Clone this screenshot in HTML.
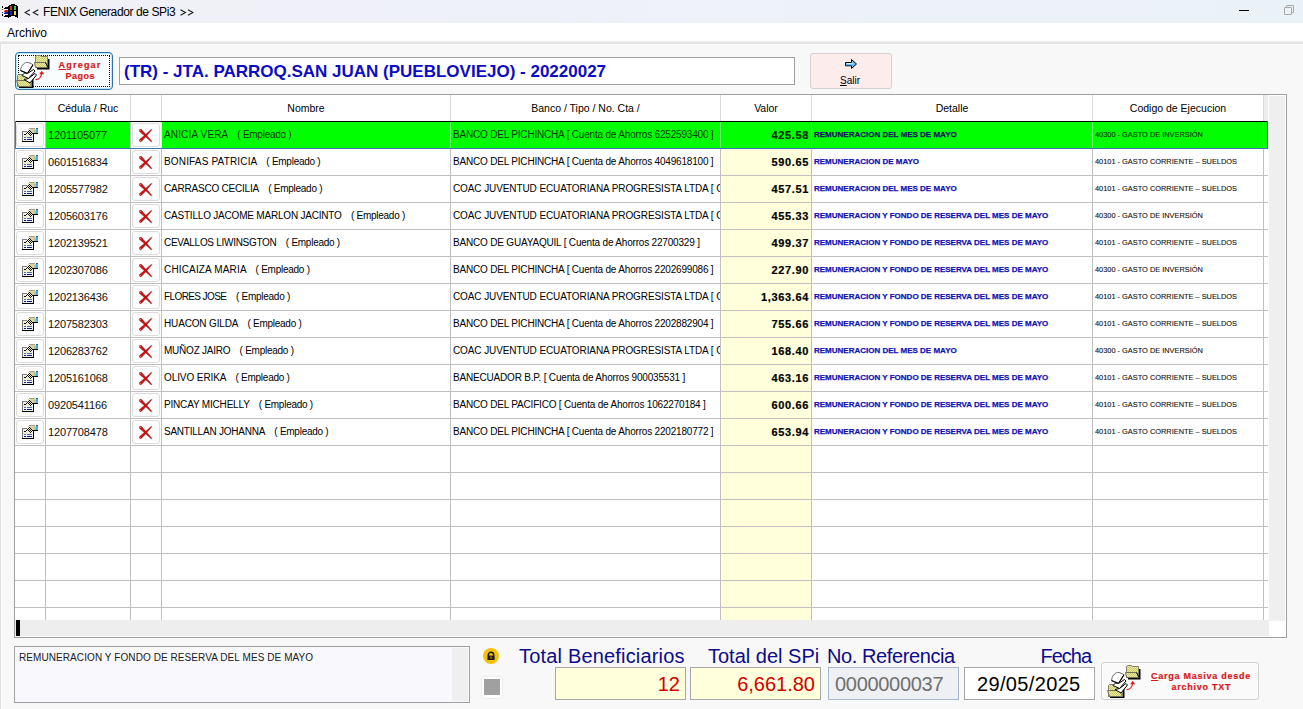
<!DOCTYPE html>
<html><head><meta charset="utf-8"><title>FENIX Generador de SPi3</title>
<style>
*{margin:0;padding:0;box-sizing:border-box}
html,body{width:1303px;height:709px;overflow:hidden;background:#f8f8f8;font-family:"Liberation Sans",sans-serif;color:#000}
.a{position:absolute}
.t{position:absolute;white-space:nowrap;line-height:1}
.eb{position:absolute;width:27px;height:24px;border:1px solid #dcdcdc;border-radius:3px;background:#fdfdfd}
.nm{font-size:10px}
.em{font-size:10px;letter-spacing:-0.26px}
.bk{font-size:10px;letter-spacing:-0.19px}
.vl{font-size:11px;font-weight:bold;letter-spacing:0.65px;-webkit-text-stroke:0.2px #000;text-align:right;width:88px}
.dt{font-size:8px;font-weight:bold;color:#1212b0;-webkit-text-stroke:0.25px #1212b0}
.cd{font-size:7.4px;color:#101010;-webkit-text-stroke:0.1px #101010}
.ced{font-size:11px;letter-spacing:-0.15px;color:#101010}
.lbl{font-size:20px;color:#0c0c88;top:646px}
.fld{position:absolute;top:667px;width:131px;height:33px;border:1px solid #a8a8a8}
.fv{font-size:20px;top:674px}
</style></head><body>

<div class="a" style="left:0;top:0;width:1303px;height:23px;background:linear-gradient(90deg,#f0f0f5 0%,#eff1f9 40%,#edf2f8 70%,#ebf2f7 100%)"></div>
<svg class="a" style="left:0;top:0" width="20" height="20" viewBox="0 0 20 20" shape-rendering="crispEdges"><path d="M8,6 L9,6 L9,5 L11,5 L11,4 L15,4 L15,5 L17,5 L17,6 L18,6 L18,18 L17,18 L17,17 L15,17 L15,16 L11,16 L11,17 L9,17 L9,18 L8,18 Z" fill="#000"/><rect x="10" y="6" width="2" height="4" fill="#e02828"/><rect x="14" y="6" width="2" height="4" fill="#30d040"/><rect x="10" y="11" width="2" height="4" fill="#1020d0"/><rect x="14" y="11" width="2" height="4" fill="#f0e030"/><rect x="2" y="6" width="1" height="2" fill="#000"/><rect x="2" y="9" width="1" height="1" fill="#904040"/><rect x="2" y="12" width="1" height="1" fill="#2020a0"/><rect x="2" y="14" width="1" height="2" fill="#000"/><rect x="4" y="7" width="4" height="2" fill="#000"/><rect x="4" y="10" width="4" height="2" fill="#d01818"/><rect x="4" y="12" width="4" height="2" fill="#1818b0"/><rect x="4" y="15" width="4" height="2" fill="#000"/><rect x="4" y="7" width="1" height="1" fill="#fff"/><rect x="4" y="10" width="1" height="1" fill="#f0b0b0"/><rect x="4" y="12" width="1" height="1" fill="#b0b0f0"/><rect x="4" y="15" width="1" height="1" fill="#fff"/></svg>
<svg class="a" style="left:24px;top:9px" width="170" height="7" viewBox="0 0 170 7"><g fill="none" stroke="#1a1a1a" stroke-width="1.1"><path d="M6,0.8 L1,3.5 L6,6.2"/><path d="M14.3,0.8 L9.3,3.5 L14.3,6.2"/><path d="M156.5,0.8 L161.5,3.5 L156.5,6.2"/><path d="M164,0.8 L169,3.5 L164,6.2"/></g></svg>
<div class="t" style="left:43px;top:6px;font-size:12px;letter-spacing:-0.4px;color:#000">FENIX Generador de SPi3</div>
<div class="a" style="left:1239px;top:10px;width:10px;height:1px;background:#000"></div>
<div class="a" style="left:1286px;top:5px;width:8px;height:8px;border:1px solid #a8a8a8;border-radius:1px"></div>
<div class="a" style="left:1284px;top:7px;width:8px;height:8px;border:1px solid #a8a8a8;background:#ebf2f7;border-radius:1px"></div>
<div class="a" style="left:0;top:23px;width:1303px;height:18px;background:#fff"></div>
<div class="t" style="left:7px;top:27px;font-size:12px">Archivo</div>
<div class="a" style="left:0;top:41px;width:1303px;height:1px;background:#eeeeee"></div>
<div class="a" style="left:0;top:42px;width:1303px;height:2px;background:#e3e3e3"></div>
<div class="a" style="left:0;top:44px;width:1303px;height:1px;background:#ffffff"></div>
<div class="a" style="left:0;top:44px;width:1px;height:665px;background:#e0e0e0"></div>
<div class="a" style="left:1px;top:45px;width:1px;height:664px;background:#ffffff"></div>
<div class="a" style="left:15px;top:52px;width:98px;height:38px;border:1px solid #2e6eaa;border-radius:4px;background:#fafdfe;box-shadow:inset 0 0 0 1px #b4eafc"></div>
<div class="a" style="left:18px;top:55px;width:92px;height:32px;border:1px dotted #000"></div>
<svg class="a" style="left:16px;top:54px" width="34" height="34" viewBox="0 0 34 34"><defs><pattern id="chk1" width="2" height="2" patternUnits="userSpaceOnUse"><rect width="2" height="2" fill="#eeee9a"/><rect width="1" height="1" fill="#c8c870"/><rect x="1" y="1" width="1" height="1" fill="#c8c870"/></pattern></defs><rect x="21" y="5" width="12.5" height="10.5" fill="#000"/><path d="M19.5,8.5 L19.5,2.5 L20.5,1.5 L24.5,1.5 L25.5,2.5 L31.5,2.5 L31.5,13.5 L19.5,13.5 Z" fill="url(#chk1)" stroke="#808070" stroke-width="1"/><path d="M18.5,8.5 L29.5,8.5 L32,13.5 L19.5,13.5 Z" fill="url(#chk1)" stroke="#707060" stroke-width="1"/><path d="M29.5,8.5 L32,13.5" stroke="#000" stroke-width="1"/><rect x="3" y="25" width="14.5" height="9" fill="#000"/><path d="M1.5,26.5 L1.5,21.5 L2.5,20.5 L6.5,20.5 L7.5,21.5 L15.5,21.5 L15.5,32.5 L1.5,32.5 Z" fill="url(#chk1)" stroke="#808070" stroke-width="1"/><path d="M0.5,26.5 L12.5,26.5 L15.5,32.5 L2.5,32.5 Z" fill="url(#chk1)" stroke="#707060" stroke-width="1"/><path d="M4.5,16.5 C5,12.5 7.5,8.8 10.5,8.5 C13,8.3 15,9.5 17,10.8 L11.5,19.5 Z" fill="#fff" stroke="#6a6a6a" stroke-width="1"/><path d="M17,10.8 L11.5,19.5 L4.5,16.5" fill="none" stroke="#000" stroke-width="1.1"/><path d="M6,21.5 L8.5,19 L11.5,19.5 L17.5,15.5 L19,17 L12.5,24.5 Z" fill="#fff" stroke="#000" stroke-width="1"/><path d="M8,25.5 L12.5,24.5 L19,19.5 L20.5,21 L14,29 Z" fill="#fff" stroke="#000" stroke-width="1"/><path d="M19.5,25.6 C22.5,25.6 25,24 25.6,19.5" fill="none" stroke="#e01818" stroke-width="1.2"/><path d="M23.2,20.2 L25.7,16.8 L28.2,20.2 Z" fill="#e01818"/></svg>
<div class="t" style="left:58.6px;top:60.1px;font-size:9px;font-weight:bold;letter-spacing:1.2px;color:#d81818;-webkit-text-stroke:0.2px #d81818;line-height:11px"><u>A</u>gregar</div>
<div class="t" style="left:65.4px;top:71.1px;font-size:9px;font-weight:bold;letter-spacing:0.5px;color:#d81818;-webkit-text-stroke:0.2px #d81818;line-height:11px">Pagos</div>
<div class="a" style="left:119px;top:57px;width:676px;height:28px;border:1px solid #a0a0a0;background:#fff"></div>
<div class="t" style="left:124px;top:63px;font-size:17px;font-weight:bold;color:#0c0cc4">(TR) - JTA. PARROQ.SAN JUAN (PUEBLOVIEJO) - 20220027</div>
<div class="a" style="left:810px;top:53px;width:82px;height:36px;border:1px solid #d2d2d2;border-radius:3px;background:#fcecec"></div>
<svg class="a" style="left:845px;top:59px" width="13" height="11" viewBox="0 0 13 11"><path d="M0.5,3.5 L6.5,3.5 L6.5,0.5 L11.5,5 L6.5,9.5 L6.5,6.8 L0.5,6.8 Z" fill="#6cc4f4" stroke="#000" stroke-width="1"/><path d="M1.5,4.6 L8,4.6" stroke="#c8f0ff" stroke-width="1"/><path d="M1,6.4 L6.5,6.4" stroke="#1a58b0" stroke-width="0.8"/></svg>
<div class="t" style="left:840px;top:76px;font-size:10px"><u>S</u>alir</div>
<div class="a" style="left:14px;top:94px;width:1273px;height:544px;border:1px solid #a0a0a0;background:#fff"></div>
<div class="a" style="left:721px;top:149px;width:90px;height:471px;background:#ffffdc"></div>
<div class="a" style="left:1264px;top:95px;width:4px;height:26px;background:#ededed"></div>
<div class="a" style="left:1269px;top:96px;width:16px;height:525px;background:#efefef"></div>
<div class="a" style="left:15px;top:620px;width:1254px;height:16px;background:#eeeeee"></div>
<div class="a" style="left:1269px;top:621px;width:17px;height:16px;background:#fff"></div>
<div class="a" style="left:16px;top:620px;width:4px;height:16px;background:#000"></div>
<div class="a" style="left:45px;top:95px;width:1px;height:26px;background:#dadada"></div>
<div class="a" style="left:130px;top:95px;width:1px;height:26px;background:#dadada"></div>
<div class="a" style="left:161px;top:95px;width:1px;height:26px;background:#dadada"></div>
<div class="a" style="left:450px;top:95px;width:1px;height:26px;background:#dadada"></div>
<div class="a" style="left:720px;top:95px;width:1px;height:26px;background:#dadada"></div>
<div class="a" style="left:811px;top:95px;width:1px;height:26px;background:#dadada"></div>
<div class="a" style="left:1092px;top:95px;width:1px;height:26px;background:#dadada"></div>
<div class="a" style="left:1263px;top:95px;width:1px;height:26px;background:#dadada"></div>
<div class="a" style="left:15px;top:121px;width:1253px;height:1px;background:#c0c0c0"></div>
<div class="a" style="left:15px;top:148px;width:1253px;height:1px;background:#c0c0c0"></div>
<div class="a" style="left:15px;top:175px;width:1253px;height:1px;background:#c0c0c0"></div>
<div class="a" style="left:15px;top:202px;width:1253px;height:1px;background:#c0c0c0"></div>
<div class="a" style="left:15px;top:229px;width:1253px;height:1px;background:#c0c0c0"></div>
<div class="a" style="left:15px;top:256px;width:1253px;height:1px;background:#c0c0c0"></div>
<div class="a" style="left:15px;top:283px;width:1253px;height:1px;background:#c0c0c0"></div>
<div class="a" style="left:15px;top:310px;width:1253px;height:1px;background:#c0c0c0"></div>
<div class="a" style="left:15px;top:337px;width:1253px;height:1px;background:#c0c0c0"></div>
<div class="a" style="left:15px;top:364px;width:1253px;height:1px;background:#c0c0c0"></div>
<div class="a" style="left:15px;top:391px;width:1253px;height:1px;background:#c0c0c0"></div>
<div class="a" style="left:15px;top:418px;width:1253px;height:1px;background:#c0c0c0"></div>
<div class="a" style="left:15px;top:445px;width:1253px;height:1px;background:#c0c0c0"></div>
<div class="a" style="left:15px;top:472px;width:1253px;height:1px;background:#c0c0c0"></div>
<div class="a" style="left:15px;top:499px;width:1253px;height:1px;background:#c0c0c0"></div>
<div class="a" style="left:15px;top:526px;width:1253px;height:1px;background:#c0c0c0"></div>
<div class="a" style="left:15px;top:553px;width:1253px;height:1px;background:#c0c0c0"></div>
<div class="a" style="left:15px;top:580px;width:1253px;height:1px;background:#c0c0c0"></div>
<div class="a" style="left:15px;top:607px;width:1253px;height:1px;background:#c0c0c0"></div>
<div class="a" style="left:45px;top:121px;width:1px;height:499px;background:#c0c0c0"></div>
<div class="a" style="left:130px;top:121px;width:1px;height:499px;background:#c0c0c0"></div>
<div class="a" style="left:161px;top:121px;width:1px;height:499px;background:#c0c0c0"></div>
<div class="a" style="left:450px;top:121px;width:1px;height:499px;background:#c0c0c0"></div>
<div class="a" style="left:720px;top:121px;width:1px;height:499px;background:#c0c0c0"></div>
<div class="a" style="left:811px;top:121px;width:1px;height:499px;background:#c0c0c0"></div>
<div class="a" style="left:1092px;top:121px;width:1px;height:499px;background:#c0c0c0"></div>
<div class="a" style="left:1263px;top:121px;width:1px;height:499px;background:#c0c0c0"></div>
<div class="t" style="left:46px;top:103px;width:84px;text-align:center;font-size:10.5px">Cédula / Ruc</div>
<div class="t" style="left:162px;top:103px;width:288px;text-align:center;font-size:10.5px">Nombre</div>
<div class="t" style="left:451px;top:103px;width:269px;text-align:center;font-size:10.5px">Banco / Tipo / No. Cta /</div>
<div class="t" style="left:721px;top:103px;width:90px;text-align:center;font-size:10.5px">Valor</div>
<div class="t" style="left:812px;top:103px;width:280px;text-align:center;font-size:10.5px">Detalle</div>
<div class="t" style="left:1093px;top:103px;width:170px;text-align:center;font-size:10.5px">Codigo de Ejecucion</div>
<div class="a" style="left:46px;top:122px;width:84px;height:26px;background:#00ff00"></div>
<div class="a" style="left:162px;top:122px;width:1106px;height:26px;background:#00ff00"></div>
<div class="a" style="left:161px;top:122px;width:1px;height:26px;background:#e4f0e4"></div>
<div class="a" style="left:450px;top:122px;width:1px;height:26px;background:#70f870"></div>
<div class="a" style="left:720px;top:122px;width:1px;height:26px;background:#70f870"></div>
<div class="a" style="left:811px;top:122px;width:1px;height:26px;background:#70f870"></div>
<div class="a" style="left:1092px;top:122px;width:1px;height:26px;background:#70f870"></div>
<div class="a" style="left:1263px;top:122px;width:1px;height:26px;background:#70f870"></div>
<div class="eb" style="left:16px;top:123px;width:28px"></div>
<svg class="a" style="left:21px;top:126px" width="18" height="17" viewBox="0 0 18 17" shape-rendering="crispEdges"><rect x="1" y="5" width="12" height="11" fill="#f2f2fc"/><rect x="2" y="7" width="9" height="4" fill="#eeeed0"/><rect x="1" y="5" width="1" height="10" fill="#747474"/><rect x="1" y="5" width="5" height="1" fill="#808080"/><rect x="12" y="8" width="1" height="8" fill="#000"/><rect x="1" y="15" width="12" height="1" fill="#000"/><rect x="3" y="11" width="2" height="1" fill="#5a64b0"/><rect x="6" y="11" width="5" height="1" fill="#4a6c90"/><rect x="3" y="13" width="2" height="1" fill="#101088"/><rect x="6" y="13" width="5" height="1" fill="#101880"/><rect x="8" y="2" width="6" height="1" fill="#a8a080"/><rect x="9" y="3" width="6" height="4" fill="#d8d0a0"/><rect x="13" y="4" width="2" height="3" fill="#b8c090"/><rect x="15" y="2" width="2" height="1" fill="#2060a0"/><rect x="15" y="3" width="2" height="4" fill="#4aa8ee"/><rect x="11" y="7" width="6" height="1" fill="#000"/><g fill="#000"><rect x="3" y="8" width="2" height="1"/><rect x="5" y="7" width="1" height="1"/><rect x="6" y="6" width="1" height="1"/><rect x="7" y="5" width="1" height="1"/><rect x="8" y="4" width="1" height="1"/><rect x="7" y="7" width="1" height="1"/><rect x="8" y="6" width="1" height="1"/><rect x="9" y="5" width="1" height="1"/><rect x="8" y="8" width="1" height="1"/><rect x="9" y="9" width="1" height="1"/><rect x="10" y="8" width="1" height="1"/><rect x="9" y="7" width="1" height="1"/><rect x="10" y="6" width="1" height="1"/></g><g fill="#f4f4c8"><rect x="4" y="7" width="1" height="1"/><rect x="5" y="6" width="1" height="1"/><rect x="6" y="5" width="1" height="1"/><rect x="7" y="4" width="1" height="1"/><rect x="6" y="7" width="1" height="1"/><rect x="7" y="6" width="1" height="1"/><rect x="8" y="5" width="1" height="1"/><rect x="8" y="7" width="1" height="1"/><rect x="9" y="8" width="1" height="1"/><rect x="9" y="6" width="1" height="1"/></g><rect x="7" y="3" width="1" height="1" fill="#c8c8b0"/></svg>
<div class="eb" style="left:132px;top:123px;width:28px"></div>
<svg class="a" style="left:139px;top:129px" width="14" height="14" viewBox="0 0 14 14"><polygon points="0,1.3 1.3,0 2.6,0.6 7,5.6 12.9,12.3 12.3,12.9 5.8,7 0.6,2.6" fill="#cc1414" stroke="#7a0808" stroke-width="0.35"/><polygon points="0,11.5 1.4,12.9 2.4,12.4 7.4,7.2 12.9,0.7 12.4,0.2 6.2,5.8 0.5,10.6" fill="#cc1414" stroke="#7a0808" stroke-width="0.35"/><circle cx="1.3" cy="1.3" r="0.6" fill="#ff9080"/><circle cx="1.2" cy="11.7" r="0.6" fill="#ff9080"/></svg>
<div class="t ced" style="left:48px;top:130px;color:#0a3a0a;">1201105077</div>
<div class="t nm" style="left:164px;top:130px;letter-spacing:0.149px;color:#0a3a0a;">ANICIA VERA</div>
<div class="t em" style="left:237.3px;top:130px;color:#0a3a0a;">( Empleado )</div>
<div class="a" style="left:451px;top:122px;width:269px;height:26px;overflow:hidden"><div class="t bk" style="left:2px;top:8px;color:#0a3a0a;">BANCO DEL PICHINCHA [ Cuenta de Ahorros 6252593400 ]</div></div>
<div class="t vl" style="left:721px;top:130px;color:#0a3a0a;">425.58</div>
<div class="t dt" style="left:814px;top:131px;color:#101030;">REMUNERACION DEL MES DE MAYO</div>
<div class="t cd" style="left:1095px;top:131px;color:#0a3a0a;">40300 - GASTO DE INVERSIÓN</div>
<div class="eb" style="left:16px;top:150px;width:28px"></div>
<svg class="a" style="left:21px;top:153px" width="18" height="17" viewBox="0 0 18 17" shape-rendering="crispEdges"><rect x="1" y="5" width="12" height="11" fill="#f2f2fc"/><rect x="2" y="7" width="9" height="4" fill="#eeeed0"/><rect x="1" y="5" width="1" height="10" fill="#747474"/><rect x="1" y="5" width="5" height="1" fill="#808080"/><rect x="12" y="8" width="1" height="8" fill="#000"/><rect x="1" y="15" width="12" height="1" fill="#000"/><rect x="3" y="11" width="2" height="1" fill="#5a64b0"/><rect x="6" y="11" width="5" height="1" fill="#4a6c90"/><rect x="3" y="13" width="2" height="1" fill="#101088"/><rect x="6" y="13" width="5" height="1" fill="#101880"/><rect x="8" y="2" width="6" height="1" fill="#a8a080"/><rect x="9" y="3" width="6" height="4" fill="#d8d0a0"/><rect x="13" y="4" width="2" height="3" fill="#b8c090"/><rect x="15" y="2" width="2" height="1" fill="#2060a0"/><rect x="15" y="3" width="2" height="4" fill="#4aa8ee"/><rect x="11" y="7" width="6" height="1" fill="#000"/><g fill="#000"><rect x="3" y="8" width="2" height="1"/><rect x="5" y="7" width="1" height="1"/><rect x="6" y="6" width="1" height="1"/><rect x="7" y="5" width="1" height="1"/><rect x="8" y="4" width="1" height="1"/><rect x="7" y="7" width="1" height="1"/><rect x="8" y="6" width="1" height="1"/><rect x="9" y="5" width="1" height="1"/><rect x="8" y="8" width="1" height="1"/><rect x="9" y="9" width="1" height="1"/><rect x="10" y="8" width="1" height="1"/><rect x="9" y="7" width="1" height="1"/><rect x="10" y="6" width="1" height="1"/></g><g fill="#f4f4c8"><rect x="4" y="7" width="1" height="1"/><rect x="5" y="6" width="1" height="1"/><rect x="6" y="5" width="1" height="1"/><rect x="7" y="4" width="1" height="1"/><rect x="6" y="7" width="1" height="1"/><rect x="7" y="6" width="1" height="1"/><rect x="8" y="5" width="1" height="1"/><rect x="8" y="7" width="1" height="1"/><rect x="9" y="8" width="1" height="1"/><rect x="9" y="6" width="1" height="1"/></g><rect x="7" y="3" width="1" height="1" fill="#c8c8b0"/></svg>
<div class="eb" style="left:132px;top:150px;width:28px"></div>
<svg class="a" style="left:139px;top:156px" width="14" height="14" viewBox="0 0 14 14"><polygon points="0,1.3 1.3,0 2.6,0.6 7,5.6 12.9,12.3 12.3,12.9 5.8,7 0.6,2.6" fill="#cc1414" stroke="#7a0808" stroke-width="0.35"/><polygon points="0,11.5 1.4,12.9 2.4,12.4 7.4,7.2 12.9,0.7 12.4,0.2 6.2,5.8 0.5,10.6" fill="#cc1414" stroke="#7a0808" stroke-width="0.35"/><circle cx="1.3" cy="1.3" r="0.6" fill="#ff9080"/><circle cx="1.2" cy="11.7" r="0.6" fill="#ff9080"/></svg>
<div class="t ced" style="left:48px;top:157px;">0601516834</div>
<div class="t nm" style="left:164px;top:157px;letter-spacing:0.169px;">BONIFAS PATRICIA</div>
<div class="t em" style="left:266.3px;top:157px;">( Empleado )</div>
<div class="a" style="left:451px;top:149px;width:269px;height:26px;overflow:hidden"><div class="t bk" style="left:2px;top:8px;">BANCO DEL PICHINCHA [ Cuenta de Ahorros 4049618100 ]</div></div>
<div class="t vl" style="left:721px;top:157px;">590.65</div>
<div class="t dt" style="left:814px;top:158px;">REMUNERACION DE MAYO</div>
<div class="t cd" style="left:1095px;top:158px;">40101 - GASTO CORRIENTE – SUELDOS</div>
<div class="eb" style="left:16px;top:177px;width:28px"></div>
<svg class="a" style="left:21px;top:180px" width="18" height="17" viewBox="0 0 18 17" shape-rendering="crispEdges"><rect x="1" y="5" width="12" height="11" fill="#f2f2fc"/><rect x="2" y="7" width="9" height="4" fill="#eeeed0"/><rect x="1" y="5" width="1" height="10" fill="#747474"/><rect x="1" y="5" width="5" height="1" fill="#808080"/><rect x="12" y="8" width="1" height="8" fill="#000"/><rect x="1" y="15" width="12" height="1" fill="#000"/><rect x="3" y="11" width="2" height="1" fill="#5a64b0"/><rect x="6" y="11" width="5" height="1" fill="#4a6c90"/><rect x="3" y="13" width="2" height="1" fill="#101088"/><rect x="6" y="13" width="5" height="1" fill="#101880"/><rect x="8" y="2" width="6" height="1" fill="#a8a080"/><rect x="9" y="3" width="6" height="4" fill="#d8d0a0"/><rect x="13" y="4" width="2" height="3" fill="#b8c090"/><rect x="15" y="2" width="2" height="1" fill="#2060a0"/><rect x="15" y="3" width="2" height="4" fill="#4aa8ee"/><rect x="11" y="7" width="6" height="1" fill="#000"/><g fill="#000"><rect x="3" y="8" width="2" height="1"/><rect x="5" y="7" width="1" height="1"/><rect x="6" y="6" width="1" height="1"/><rect x="7" y="5" width="1" height="1"/><rect x="8" y="4" width="1" height="1"/><rect x="7" y="7" width="1" height="1"/><rect x="8" y="6" width="1" height="1"/><rect x="9" y="5" width="1" height="1"/><rect x="8" y="8" width="1" height="1"/><rect x="9" y="9" width="1" height="1"/><rect x="10" y="8" width="1" height="1"/><rect x="9" y="7" width="1" height="1"/><rect x="10" y="6" width="1" height="1"/></g><g fill="#f4f4c8"><rect x="4" y="7" width="1" height="1"/><rect x="5" y="6" width="1" height="1"/><rect x="6" y="5" width="1" height="1"/><rect x="7" y="4" width="1" height="1"/><rect x="6" y="7" width="1" height="1"/><rect x="7" y="6" width="1" height="1"/><rect x="8" y="5" width="1" height="1"/><rect x="8" y="7" width="1" height="1"/><rect x="9" y="8" width="1" height="1"/><rect x="9" y="6" width="1" height="1"/></g><rect x="7" y="3" width="1" height="1" fill="#c8c8b0"/></svg>
<div class="eb" style="left:132px;top:177px;width:28px"></div>
<svg class="a" style="left:139px;top:183px" width="14" height="14" viewBox="0 0 14 14"><polygon points="0,1.3 1.3,0 2.6,0.6 7,5.6 12.9,12.3 12.3,12.9 5.8,7 0.6,2.6" fill="#cc1414" stroke="#7a0808" stroke-width="0.35"/><polygon points="0,11.5 1.4,12.9 2.4,12.4 7.4,7.2 12.9,0.7 12.4,0.2 6.2,5.8 0.5,10.6" fill="#cc1414" stroke="#7a0808" stroke-width="0.35"/><circle cx="1.3" cy="1.3" r="0.6" fill="#ff9080"/><circle cx="1.2" cy="11.7" r="0.6" fill="#ff9080"/></svg>
<div class="t ced" style="left:48px;top:184px;">1205577982</div>
<div class="t nm" style="left:164px;top:184px;letter-spacing:-0.211px;">CARRASCO CECILIA</div>
<div class="t em" style="left:268.2px;top:184px;">( Empleado )</div>
<div class="a" style="left:451px;top:176px;width:269px;height:26px;overflow:hidden"><div class="t bk" style="left:2px;top:8px;letter-spacing:-0.1px;">COAC JUVENTUD ECUATORIANA PROGRESISTA LTDA [ Cuenta de Ahorros</div></div>
<div class="t vl" style="left:721px;top:184px;">457.51</div>
<div class="t dt" style="left:814px;top:185px;">REMUNERACION DEL MES DE MAYO</div>
<div class="t cd" style="left:1095px;top:185px;">40101 - GASTO CORRIENTE – SUELDOS</div>
<div class="eb" style="left:16px;top:204px;width:28px"></div>
<svg class="a" style="left:21px;top:207px" width="18" height="17" viewBox="0 0 18 17" shape-rendering="crispEdges"><rect x="1" y="5" width="12" height="11" fill="#f2f2fc"/><rect x="2" y="7" width="9" height="4" fill="#eeeed0"/><rect x="1" y="5" width="1" height="10" fill="#747474"/><rect x="1" y="5" width="5" height="1" fill="#808080"/><rect x="12" y="8" width="1" height="8" fill="#000"/><rect x="1" y="15" width="12" height="1" fill="#000"/><rect x="3" y="11" width="2" height="1" fill="#5a64b0"/><rect x="6" y="11" width="5" height="1" fill="#4a6c90"/><rect x="3" y="13" width="2" height="1" fill="#101088"/><rect x="6" y="13" width="5" height="1" fill="#101880"/><rect x="8" y="2" width="6" height="1" fill="#a8a080"/><rect x="9" y="3" width="6" height="4" fill="#d8d0a0"/><rect x="13" y="4" width="2" height="3" fill="#b8c090"/><rect x="15" y="2" width="2" height="1" fill="#2060a0"/><rect x="15" y="3" width="2" height="4" fill="#4aa8ee"/><rect x="11" y="7" width="6" height="1" fill="#000"/><g fill="#000"><rect x="3" y="8" width="2" height="1"/><rect x="5" y="7" width="1" height="1"/><rect x="6" y="6" width="1" height="1"/><rect x="7" y="5" width="1" height="1"/><rect x="8" y="4" width="1" height="1"/><rect x="7" y="7" width="1" height="1"/><rect x="8" y="6" width="1" height="1"/><rect x="9" y="5" width="1" height="1"/><rect x="8" y="8" width="1" height="1"/><rect x="9" y="9" width="1" height="1"/><rect x="10" y="8" width="1" height="1"/><rect x="9" y="7" width="1" height="1"/><rect x="10" y="6" width="1" height="1"/></g><g fill="#f4f4c8"><rect x="4" y="7" width="1" height="1"/><rect x="5" y="6" width="1" height="1"/><rect x="6" y="5" width="1" height="1"/><rect x="7" y="4" width="1" height="1"/><rect x="6" y="7" width="1" height="1"/><rect x="7" y="6" width="1" height="1"/><rect x="8" y="5" width="1" height="1"/><rect x="8" y="7" width="1" height="1"/><rect x="9" y="8" width="1" height="1"/><rect x="9" y="6" width="1" height="1"/></g><rect x="7" y="3" width="1" height="1" fill="#c8c8b0"/></svg>
<div class="eb" style="left:132px;top:204px;width:28px"></div>
<svg class="a" style="left:139px;top:210px" width="14" height="14" viewBox="0 0 14 14"><polygon points="0,1.3 1.3,0 2.6,0.6 7,5.6 12.9,12.3 12.3,12.9 5.8,7 0.6,2.6" fill="#cc1414" stroke="#7a0808" stroke-width="0.35"/><polygon points="0,11.5 1.4,12.9 2.4,12.4 7.4,7.2 12.9,0.7 12.4,0.2 6.2,5.8 0.5,10.6" fill="#cc1414" stroke="#7a0808" stroke-width="0.35"/><circle cx="1.3" cy="1.3" r="0.6" fill="#ff9080"/><circle cx="1.2" cy="11.7" r="0.6" fill="#ff9080"/></svg>
<div class="t ced" style="left:48px;top:211px;">1205603176</div>
<div class="t nm" style="left:164px;top:211px;letter-spacing:-0.202px;">CASTILLO JACOME MARLON JACINTO</div>
<div class="t em" style="left:350.9px;top:211px;">( Empleado )</div>
<div class="a" style="left:451px;top:203px;width:269px;height:26px;overflow:hidden"><div class="t bk" style="left:2px;top:8px;letter-spacing:-0.1px;">COAC JUVENTUD ECUATORIANA PROGRESISTA LTDA [ Cuenta de Ahorros</div></div>
<div class="t vl" style="left:721px;top:211px;">455.33</div>
<div class="t dt" style="left:814px;top:212px;">REMUNERACION Y FONDO DE RESERVA DEL MES DE MAYO</div>
<div class="t cd" style="left:1095px;top:212px;">40300 - GASTO DE INVERSIÓN</div>
<div class="eb" style="left:16px;top:231px;width:28px"></div>
<svg class="a" style="left:21px;top:234px" width="18" height="17" viewBox="0 0 18 17" shape-rendering="crispEdges"><rect x="1" y="5" width="12" height="11" fill="#f2f2fc"/><rect x="2" y="7" width="9" height="4" fill="#eeeed0"/><rect x="1" y="5" width="1" height="10" fill="#747474"/><rect x="1" y="5" width="5" height="1" fill="#808080"/><rect x="12" y="8" width="1" height="8" fill="#000"/><rect x="1" y="15" width="12" height="1" fill="#000"/><rect x="3" y="11" width="2" height="1" fill="#5a64b0"/><rect x="6" y="11" width="5" height="1" fill="#4a6c90"/><rect x="3" y="13" width="2" height="1" fill="#101088"/><rect x="6" y="13" width="5" height="1" fill="#101880"/><rect x="8" y="2" width="6" height="1" fill="#a8a080"/><rect x="9" y="3" width="6" height="4" fill="#d8d0a0"/><rect x="13" y="4" width="2" height="3" fill="#b8c090"/><rect x="15" y="2" width="2" height="1" fill="#2060a0"/><rect x="15" y="3" width="2" height="4" fill="#4aa8ee"/><rect x="11" y="7" width="6" height="1" fill="#000"/><g fill="#000"><rect x="3" y="8" width="2" height="1"/><rect x="5" y="7" width="1" height="1"/><rect x="6" y="6" width="1" height="1"/><rect x="7" y="5" width="1" height="1"/><rect x="8" y="4" width="1" height="1"/><rect x="7" y="7" width="1" height="1"/><rect x="8" y="6" width="1" height="1"/><rect x="9" y="5" width="1" height="1"/><rect x="8" y="8" width="1" height="1"/><rect x="9" y="9" width="1" height="1"/><rect x="10" y="8" width="1" height="1"/><rect x="9" y="7" width="1" height="1"/><rect x="10" y="6" width="1" height="1"/></g><g fill="#f4f4c8"><rect x="4" y="7" width="1" height="1"/><rect x="5" y="6" width="1" height="1"/><rect x="6" y="5" width="1" height="1"/><rect x="7" y="4" width="1" height="1"/><rect x="6" y="7" width="1" height="1"/><rect x="7" y="6" width="1" height="1"/><rect x="8" y="5" width="1" height="1"/><rect x="8" y="7" width="1" height="1"/><rect x="9" y="8" width="1" height="1"/><rect x="9" y="6" width="1" height="1"/></g><rect x="7" y="3" width="1" height="1" fill="#c8c8b0"/></svg>
<div class="eb" style="left:132px;top:231px;width:28px"></div>
<svg class="a" style="left:139px;top:237px" width="14" height="14" viewBox="0 0 14 14"><polygon points="0,1.3 1.3,0 2.6,0.6 7,5.6 12.9,12.3 12.3,12.9 5.8,7 0.6,2.6" fill="#cc1414" stroke="#7a0808" stroke-width="0.35"/><polygon points="0,11.5 1.4,12.9 2.4,12.4 7.4,7.2 12.9,0.7 12.4,0.2 6.2,5.8 0.5,10.6" fill="#cc1414" stroke="#7a0808" stroke-width="0.35"/><circle cx="1.3" cy="1.3" r="0.6" fill="#ff9080"/><circle cx="1.2" cy="11.7" r="0.6" fill="#ff9080"/></svg>
<div class="t ced" style="left:48px;top:238px;">1202139521</div>
<div class="t nm" style="left:164px;top:238px;letter-spacing:-0.289px;">CEVALLOS LIWINSGTON</div>
<div class="t em" style="left:285.8px;top:238px;">( Empleado )</div>
<div class="a" style="left:451px;top:230px;width:269px;height:26px;overflow:hidden"><div class="t bk" style="left:2px;top:8px;">BANCO DE GUAYAQUIL [ Cuenta de Ahorros 22700329 ]</div></div>
<div class="t vl" style="left:721px;top:238px;">499.37</div>
<div class="t dt" style="left:814px;top:239px;">REMUNERACION Y FONDO DE RESERVA DEL MES DE MAYO</div>
<div class="t cd" style="left:1095px;top:239px;">40101 - GASTO CORRIENTE – SUELDOS</div>
<div class="eb" style="left:16px;top:258px;width:28px"></div>
<svg class="a" style="left:21px;top:261px" width="18" height="17" viewBox="0 0 18 17" shape-rendering="crispEdges"><rect x="1" y="5" width="12" height="11" fill="#f2f2fc"/><rect x="2" y="7" width="9" height="4" fill="#eeeed0"/><rect x="1" y="5" width="1" height="10" fill="#747474"/><rect x="1" y="5" width="5" height="1" fill="#808080"/><rect x="12" y="8" width="1" height="8" fill="#000"/><rect x="1" y="15" width="12" height="1" fill="#000"/><rect x="3" y="11" width="2" height="1" fill="#5a64b0"/><rect x="6" y="11" width="5" height="1" fill="#4a6c90"/><rect x="3" y="13" width="2" height="1" fill="#101088"/><rect x="6" y="13" width="5" height="1" fill="#101880"/><rect x="8" y="2" width="6" height="1" fill="#a8a080"/><rect x="9" y="3" width="6" height="4" fill="#d8d0a0"/><rect x="13" y="4" width="2" height="3" fill="#b8c090"/><rect x="15" y="2" width="2" height="1" fill="#2060a0"/><rect x="15" y="3" width="2" height="4" fill="#4aa8ee"/><rect x="11" y="7" width="6" height="1" fill="#000"/><g fill="#000"><rect x="3" y="8" width="2" height="1"/><rect x="5" y="7" width="1" height="1"/><rect x="6" y="6" width="1" height="1"/><rect x="7" y="5" width="1" height="1"/><rect x="8" y="4" width="1" height="1"/><rect x="7" y="7" width="1" height="1"/><rect x="8" y="6" width="1" height="1"/><rect x="9" y="5" width="1" height="1"/><rect x="8" y="8" width="1" height="1"/><rect x="9" y="9" width="1" height="1"/><rect x="10" y="8" width="1" height="1"/><rect x="9" y="7" width="1" height="1"/><rect x="10" y="6" width="1" height="1"/></g><g fill="#f4f4c8"><rect x="4" y="7" width="1" height="1"/><rect x="5" y="6" width="1" height="1"/><rect x="6" y="5" width="1" height="1"/><rect x="7" y="4" width="1" height="1"/><rect x="6" y="7" width="1" height="1"/><rect x="7" y="6" width="1" height="1"/><rect x="8" y="5" width="1" height="1"/><rect x="8" y="7" width="1" height="1"/><rect x="9" y="8" width="1" height="1"/><rect x="9" y="6" width="1" height="1"/></g><rect x="7" y="3" width="1" height="1" fill="#c8c8b0"/></svg>
<div class="eb" style="left:132px;top:258px;width:28px"></div>
<svg class="a" style="left:139px;top:264px" width="14" height="14" viewBox="0 0 14 14"><polygon points="0,1.3 1.3,0 2.6,0.6 7,5.6 12.9,12.3 12.3,12.9 5.8,7 0.6,2.6" fill="#cc1414" stroke="#7a0808" stroke-width="0.35"/><polygon points="0,11.5 1.4,12.9 2.4,12.4 7.4,7.2 12.9,0.7 12.4,0.2 6.2,5.8 0.5,10.6" fill="#cc1414" stroke="#7a0808" stroke-width="0.35"/><circle cx="1.3" cy="1.3" r="0.6" fill="#ff9080"/><circle cx="1.2" cy="11.7" r="0.6" fill="#ff9080"/></svg>
<div class="t ced" style="left:48px;top:265px;">1202307086</div>
<div class="t nm" style="left:164px;top:265px;letter-spacing:0.155px;">CHICAIZA MARIA</div>
<div class="t em" style="left:255.6px;top:265px;">( Empleado )</div>
<div class="a" style="left:451px;top:257px;width:269px;height:26px;overflow:hidden"><div class="t bk" style="left:2px;top:8px;">BANCO DEL PICHINCHA [ Cuenta de Ahorros 2202699086 ]</div></div>
<div class="t vl" style="left:721px;top:265px;">227.90</div>
<div class="t dt" style="left:814px;top:266px;">REMUNERACION Y FONDO DE RESERVA DEL MES DE MAYO</div>
<div class="t cd" style="left:1095px;top:266px;">40300 - GASTO DE INVERSIÓN</div>
<div class="eb" style="left:16px;top:285px;width:28px"></div>
<svg class="a" style="left:21px;top:288px" width="18" height="17" viewBox="0 0 18 17" shape-rendering="crispEdges"><rect x="1" y="5" width="12" height="11" fill="#f2f2fc"/><rect x="2" y="7" width="9" height="4" fill="#eeeed0"/><rect x="1" y="5" width="1" height="10" fill="#747474"/><rect x="1" y="5" width="5" height="1" fill="#808080"/><rect x="12" y="8" width="1" height="8" fill="#000"/><rect x="1" y="15" width="12" height="1" fill="#000"/><rect x="3" y="11" width="2" height="1" fill="#5a64b0"/><rect x="6" y="11" width="5" height="1" fill="#4a6c90"/><rect x="3" y="13" width="2" height="1" fill="#101088"/><rect x="6" y="13" width="5" height="1" fill="#101880"/><rect x="8" y="2" width="6" height="1" fill="#a8a080"/><rect x="9" y="3" width="6" height="4" fill="#d8d0a0"/><rect x="13" y="4" width="2" height="3" fill="#b8c090"/><rect x="15" y="2" width="2" height="1" fill="#2060a0"/><rect x="15" y="3" width="2" height="4" fill="#4aa8ee"/><rect x="11" y="7" width="6" height="1" fill="#000"/><g fill="#000"><rect x="3" y="8" width="2" height="1"/><rect x="5" y="7" width="1" height="1"/><rect x="6" y="6" width="1" height="1"/><rect x="7" y="5" width="1" height="1"/><rect x="8" y="4" width="1" height="1"/><rect x="7" y="7" width="1" height="1"/><rect x="8" y="6" width="1" height="1"/><rect x="9" y="5" width="1" height="1"/><rect x="8" y="8" width="1" height="1"/><rect x="9" y="9" width="1" height="1"/><rect x="10" y="8" width="1" height="1"/><rect x="9" y="7" width="1" height="1"/><rect x="10" y="6" width="1" height="1"/></g><g fill="#f4f4c8"><rect x="4" y="7" width="1" height="1"/><rect x="5" y="6" width="1" height="1"/><rect x="6" y="5" width="1" height="1"/><rect x="7" y="4" width="1" height="1"/><rect x="6" y="7" width="1" height="1"/><rect x="7" y="6" width="1" height="1"/><rect x="8" y="5" width="1" height="1"/><rect x="8" y="7" width="1" height="1"/><rect x="9" y="8" width="1" height="1"/><rect x="9" y="6" width="1" height="1"/></g><rect x="7" y="3" width="1" height="1" fill="#c8c8b0"/></svg>
<div class="eb" style="left:132px;top:285px;width:28px"></div>
<svg class="a" style="left:139px;top:291px" width="14" height="14" viewBox="0 0 14 14"><polygon points="0,1.3 1.3,0 2.6,0.6 7,5.6 12.9,12.3 12.3,12.9 5.8,7 0.6,2.6" fill="#cc1414" stroke="#7a0808" stroke-width="0.35"/><polygon points="0,11.5 1.4,12.9 2.4,12.4 7.4,7.2 12.9,0.7 12.4,0.2 6.2,5.8 0.5,10.6" fill="#cc1414" stroke="#7a0808" stroke-width="0.35"/><circle cx="1.3" cy="1.3" r="0.6" fill="#ff9080"/><circle cx="1.2" cy="11.7" r="0.6" fill="#ff9080"/></svg>
<div class="t ced" style="left:48px;top:292px;">1202136436</div>
<div class="t nm" style="left:164px;top:292px;letter-spacing:-0.601px;">FLORES JOSE</div>
<div class="t em" style="left:235.9px;top:292px;">( Empleado )</div>
<div class="a" style="left:451px;top:284px;width:269px;height:26px;overflow:hidden"><div class="t bk" style="left:2px;top:8px;letter-spacing:-0.1px;">COAC JUVENTUD ECUATORIANA PROGRESISTA LTDA [ Cuenta de Ahorros</div></div>
<div class="t vl" style="left:721px;top:292px;">1,363.64</div>
<div class="t dt" style="left:814px;top:293px;">REMUNERACION Y FONDO DE RESERVA DEL MES DE MAYO</div>
<div class="t cd" style="left:1095px;top:293px;">40101 - GASTO CORRIENTE – SUELDOS</div>
<div class="eb" style="left:16px;top:312px;width:28px"></div>
<svg class="a" style="left:21px;top:315px" width="18" height="17" viewBox="0 0 18 17" shape-rendering="crispEdges"><rect x="1" y="5" width="12" height="11" fill="#f2f2fc"/><rect x="2" y="7" width="9" height="4" fill="#eeeed0"/><rect x="1" y="5" width="1" height="10" fill="#747474"/><rect x="1" y="5" width="5" height="1" fill="#808080"/><rect x="12" y="8" width="1" height="8" fill="#000"/><rect x="1" y="15" width="12" height="1" fill="#000"/><rect x="3" y="11" width="2" height="1" fill="#5a64b0"/><rect x="6" y="11" width="5" height="1" fill="#4a6c90"/><rect x="3" y="13" width="2" height="1" fill="#101088"/><rect x="6" y="13" width="5" height="1" fill="#101880"/><rect x="8" y="2" width="6" height="1" fill="#a8a080"/><rect x="9" y="3" width="6" height="4" fill="#d8d0a0"/><rect x="13" y="4" width="2" height="3" fill="#b8c090"/><rect x="15" y="2" width="2" height="1" fill="#2060a0"/><rect x="15" y="3" width="2" height="4" fill="#4aa8ee"/><rect x="11" y="7" width="6" height="1" fill="#000"/><g fill="#000"><rect x="3" y="8" width="2" height="1"/><rect x="5" y="7" width="1" height="1"/><rect x="6" y="6" width="1" height="1"/><rect x="7" y="5" width="1" height="1"/><rect x="8" y="4" width="1" height="1"/><rect x="7" y="7" width="1" height="1"/><rect x="8" y="6" width="1" height="1"/><rect x="9" y="5" width="1" height="1"/><rect x="8" y="8" width="1" height="1"/><rect x="9" y="9" width="1" height="1"/><rect x="10" y="8" width="1" height="1"/><rect x="9" y="7" width="1" height="1"/><rect x="10" y="6" width="1" height="1"/></g><g fill="#f4f4c8"><rect x="4" y="7" width="1" height="1"/><rect x="5" y="6" width="1" height="1"/><rect x="6" y="5" width="1" height="1"/><rect x="7" y="4" width="1" height="1"/><rect x="6" y="7" width="1" height="1"/><rect x="7" y="6" width="1" height="1"/><rect x="8" y="5" width="1" height="1"/><rect x="8" y="7" width="1" height="1"/><rect x="9" y="8" width="1" height="1"/><rect x="9" y="6" width="1" height="1"/></g><rect x="7" y="3" width="1" height="1" fill="#c8c8b0"/></svg>
<div class="eb" style="left:132px;top:312px;width:28px"></div>
<svg class="a" style="left:139px;top:318px" width="14" height="14" viewBox="0 0 14 14"><polygon points="0,1.3 1.3,0 2.6,0.6 7,5.6 12.9,12.3 12.3,12.9 5.8,7 0.6,2.6" fill="#cc1414" stroke="#7a0808" stroke-width="0.35"/><polygon points="0,11.5 1.4,12.9 2.4,12.4 7.4,7.2 12.9,0.7 12.4,0.2 6.2,5.8 0.5,10.6" fill="#cc1414" stroke="#7a0808" stroke-width="0.35"/><circle cx="1.3" cy="1.3" r="0.6" fill="#ff9080"/><circle cx="1.2" cy="11.7" r="0.6" fill="#ff9080"/></svg>
<div class="t ced" style="left:48px;top:319px;">1207582303</div>
<div class="t nm" style="left:164px;top:319px;letter-spacing:-0.156px;">HUACON GILDA</div>
<div class="t em" style="left:247.4px;top:319px;">( Empleado )</div>
<div class="a" style="left:451px;top:311px;width:269px;height:26px;overflow:hidden"><div class="t bk" style="left:2px;top:8px;">BANCO DEL PICHINCHA [ Cuenta de Ahorros 2202882904 ]</div></div>
<div class="t vl" style="left:721px;top:319px;">755.66</div>
<div class="t dt" style="left:814px;top:320px;">REMUNERACION Y FONDO DE RESERVA DEL MES DE MAYO</div>
<div class="t cd" style="left:1095px;top:320px;">40101 - GASTO CORRIENTE – SUELDOS</div>
<div class="eb" style="left:16px;top:339px;width:28px"></div>
<svg class="a" style="left:21px;top:342px" width="18" height="17" viewBox="0 0 18 17" shape-rendering="crispEdges"><rect x="1" y="5" width="12" height="11" fill="#f2f2fc"/><rect x="2" y="7" width="9" height="4" fill="#eeeed0"/><rect x="1" y="5" width="1" height="10" fill="#747474"/><rect x="1" y="5" width="5" height="1" fill="#808080"/><rect x="12" y="8" width="1" height="8" fill="#000"/><rect x="1" y="15" width="12" height="1" fill="#000"/><rect x="3" y="11" width="2" height="1" fill="#5a64b0"/><rect x="6" y="11" width="5" height="1" fill="#4a6c90"/><rect x="3" y="13" width="2" height="1" fill="#101088"/><rect x="6" y="13" width="5" height="1" fill="#101880"/><rect x="8" y="2" width="6" height="1" fill="#a8a080"/><rect x="9" y="3" width="6" height="4" fill="#d8d0a0"/><rect x="13" y="4" width="2" height="3" fill="#b8c090"/><rect x="15" y="2" width="2" height="1" fill="#2060a0"/><rect x="15" y="3" width="2" height="4" fill="#4aa8ee"/><rect x="11" y="7" width="6" height="1" fill="#000"/><g fill="#000"><rect x="3" y="8" width="2" height="1"/><rect x="5" y="7" width="1" height="1"/><rect x="6" y="6" width="1" height="1"/><rect x="7" y="5" width="1" height="1"/><rect x="8" y="4" width="1" height="1"/><rect x="7" y="7" width="1" height="1"/><rect x="8" y="6" width="1" height="1"/><rect x="9" y="5" width="1" height="1"/><rect x="8" y="8" width="1" height="1"/><rect x="9" y="9" width="1" height="1"/><rect x="10" y="8" width="1" height="1"/><rect x="9" y="7" width="1" height="1"/><rect x="10" y="6" width="1" height="1"/></g><g fill="#f4f4c8"><rect x="4" y="7" width="1" height="1"/><rect x="5" y="6" width="1" height="1"/><rect x="6" y="5" width="1" height="1"/><rect x="7" y="4" width="1" height="1"/><rect x="6" y="7" width="1" height="1"/><rect x="7" y="6" width="1" height="1"/><rect x="8" y="5" width="1" height="1"/><rect x="8" y="7" width="1" height="1"/><rect x="9" y="8" width="1" height="1"/><rect x="9" y="6" width="1" height="1"/></g><rect x="7" y="3" width="1" height="1" fill="#c8c8b0"/></svg>
<div class="eb" style="left:132px;top:339px;width:28px"></div>
<svg class="a" style="left:139px;top:345px" width="14" height="14" viewBox="0 0 14 14"><polygon points="0,1.3 1.3,0 2.6,0.6 7,5.6 12.9,12.3 12.3,12.9 5.8,7 0.6,2.6" fill="#cc1414" stroke="#7a0808" stroke-width="0.35"/><polygon points="0,11.5 1.4,12.9 2.4,12.4 7.4,7.2 12.9,0.7 12.4,0.2 6.2,5.8 0.5,10.6" fill="#cc1414" stroke="#7a0808" stroke-width="0.35"/><circle cx="1.3" cy="1.3" r="0.6" fill="#ff9080"/><circle cx="1.2" cy="11.7" r="0.6" fill="#ff9080"/></svg>
<div class="t ced" style="left:48px;top:346px;">1206283762</div>
<div class="t nm" style="left:164px;top:346px;letter-spacing:-0.229px;">MUÑOZ JAIRO</div>
<div class="t em" style="left:239.6px;top:346px;">( Empleado )</div>
<div class="a" style="left:451px;top:338px;width:269px;height:26px;overflow:hidden"><div class="t bk" style="left:2px;top:8px;letter-spacing:-0.1px;">COAC JUVENTUD ECUATORIANA PROGRESISTA LTDA [ Cuenta de Ahorros</div></div>
<div class="t vl" style="left:721px;top:346px;">168.40</div>
<div class="t dt" style="left:814px;top:347px;">REMUNERACION DEL MES DE MAYO</div>
<div class="t cd" style="left:1095px;top:347px;">40300 - GASTO DE INVERSIÓN</div>
<div class="eb" style="left:16px;top:366px;width:28px"></div>
<svg class="a" style="left:21px;top:369px" width="18" height="17" viewBox="0 0 18 17" shape-rendering="crispEdges"><rect x="1" y="5" width="12" height="11" fill="#f2f2fc"/><rect x="2" y="7" width="9" height="4" fill="#eeeed0"/><rect x="1" y="5" width="1" height="10" fill="#747474"/><rect x="1" y="5" width="5" height="1" fill="#808080"/><rect x="12" y="8" width="1" height="8" fill="#000"/><rect x="1" y="15" width="12" height="1" fill="#000"/><rect x="3" y="11" width="2" height="1" fill="#5a64b0"/><rect x="6" y="11" width="5" height="1" fill="#4a6c90"/><rect x="3" y="13" width="2" height="1" fill="#101088"/><rect x="6" y="13" width="5" height="1" fill="#101880"/><rect x="8" y="2" width="6" height="1" fill="#a8a080"/><rect x="9" y="3" width="6" height="4" fill="#d8d0a0"/><rect x="13" y="4" width="2" height="3" fill="#b8c090"/><rect x="15" y="2" width="2" height="1" fill="#2060a0"/><rect x="15" y="3" width="2" height="4" fill="#4aa8ee"/><rect x="11" y="7" width="6" height="1" fill="#000"/><g fill="#000"><rect x="3" y="8" width="2" height="1"/><rect x="5" y="7" width="1" height="1"/><rect x="6" y="6" width="1" height="1"/><rect x="7" y="5" width="1" height="1"/><rect x="8" y="4" width="1" height="1"/><rect x="7" y="7" width="1" height="1"/><rect x="8" y="6" width="1" height="1"/><rect x="9" y="5" width="1" height="1"/><rect x="8" y="8" width="1" height="1"/><rect x="9" y="9" width="1" height="1"/><rect x="10" y="8" width="1" height="1"/><rect x="9" y="7" width="1" height="1"/><rect x="10" y="6" width="1" height="1"/></g><g fill="#f4f4c8"><rect x="4" y="7" width="1" height="1"/><rect x="5" y="6" width="1" height="1"/><rect x="6" y="5" width="1" height="1"/><rect x="7" y="4" width="1" height="1"/><rect x="6" y="7" width="1" height="1"/><rect x="7" y="6" width="1" height="1"/><rect x="8" y="5" width="1" height="1"/><rect x="8" y="7" width="1" height="1"/><rect x="9" y="8" width="1" height="1"/><rect x="9" y="6" width="1" height="1"/></g><rect x="7" y="3" width="1" height="1" fill="#c8c8b0"/></svg>
<div class="eb" style="left:132px;top:366px;width:28px"></div>
<svg class="a" style="left:139px;top:372px" width="14" height="14" viewBox="0 0 14 14"><polygon points="0,1.3 1.3,0 2.6,0.6 7,5.6 12.9,12.3 12.3,12.9 5.8,7 0.6,2.6" fill="#cc1414" stroke="#7a0808" stroke-width="0.35"/><polygon points="0,11.5 1.4,12.9 2.4,12.4 7.4,7.2 12.9,0.7 12.4,0.2 6.2,5.8 0.5,10.6" fill="#cc1414" stroke="#7a0808" stroke-width="0.35"/><circle cx="1.3" cy="1.3" r="0.6" fill="#ff9080"/><circle cx="1.2" cy="11.7" r="0.6" fill="#ff9080"/></svg>
<div class="t ced" style="left:48px;top:373px;">1205161068</div>
<div class="t nm" style="left:164px;top:373px;letter-spacing:-0.086px;">OLIVO ERIKA</div>
<div class="t em" style="left:235.5px;top:373px;">( Empleado )</div>
<div class="a" style="left:451px;top:365px;width:269px;height:26px;overflow:hidden"><div class="t bk" style="left:2px;top:8px;">BANECUADOR B.P. [ Cuenta de Ahorros 900035531 ]</div></div>
<div class="t vl" style="left:721px;top:373px;">463.16</div>
<div class="t dt" style="left:814px;top:374px;">REMUNERACION Y FONDO DE RESERVA DEL MES DE MAYO</div>
<div class="t cd" style="left:1095px;top:374px;">40101 - GASTO CORRIENTE – SUELDOS</div>
<div class="eb" style="left:16px;top:393px;width:28px"></div>
<svg class="a" style="left:21px;top:396px" width="18" height="17" viewBox="0 0 18 17" shape-rendering="crispEdges"><rect x="1" y="5" width="12" height="11" fill="#f2f2fc"/><rect x="2" y="7" width="9" height="4" fill="#eeeed0"/><rect x="1" y="5" width="1" height="10" fill="#747474"/><rect x="1" y="5" width="5" height="1" fill="#808080"/><rect x="12" y="8" width="1" height="8" fill="#000"/><rect x="1" y="15" width="12" height="1" fill="#000"/><rect x="3" y="11" width="2" height="1" fill="#5a64b0"/><rect x="6" y="11" width="5" height="1" fill="#4a6c90"/><rect x="3" y="13" width="2" height="1" fill="#101088"/><rect x="6" y="13" width="5" height="1" fill="#101880"/><rect x="8" y="2" width="6" height="1" fill="#a8a080"/><rect x="9" y="3" width="6" height="4" fill="#d8d0a0"/><rect x="13" y="4" width="2" height="3" fill="#b8c090"/><rect x="15" y="2" width="2" height="1" fill="#2060a0"/><rect x="15" y="3" width="2" height="4" fill="#4aa8ee"/><rect x="11" y="7" width="6" height="1" fill="#000"/><g fill="#000"><rect x="3" y="8" width="2" height="1"/><rect x="5" y="7" width="1" height="1"/><rect x="6" y="6" width="1" height="1"/><rect x="7" y="5" width="1" height="1"/><rect x="8" y="4" width="1" height="1"/><rect x="7" y="7" width="1" height="1"/><rect x="8" y="6" width="1" height="1"/><rect x="9" y="5" width="1" height="1"/><rect x="8" y="8" width="1" height="1"/><rect x="9" y="9" width="1" height="1"/><rect x="10" y="8" width="1" height="1"/><rect x="9" y="7" width="1" height="1"/><rect x="10" y="6" width="1" height="1"/></g><g fill="#f4f4c8"><rect x="4" y="7" width="1" height="1"/><rect x="5" y="6" width="1" height="1"/><rect x="6" y="5" width="1" height="1"/><rect x="7" y="4" width="1" height="1"/><rect x="6" y="7" width="1" height="1"/><rect x="7" y="6" width="1" height="1"/><rect x="8" y="5" width="1" height="1"/><rect x="8" y="7" width="1" height="1"/><rect x="9" y="8" width="1" height="1"/><rect x="9" y="6" width="1" height="1"/></g><rect x="7" y="3" width="1" height="1" fill="#c8c8b0"/></svg>
<div class="eb" style="left:132px;top:393px;width:28px"></div>
<svg class="a" style="left:139px;top:399px" width="14" height="14" viewBox="0 0 14 14"><polygon points="0,1.3 1.3,0 2.6,0.6 7,5.6 12.9,12.3 12.3,12.9 5.8,7 0.6,2.6" fill="#cc1414" stroke="#7a0808" stroke-width="0.35"/><polygon points="0,11.5 1.4,12.9 2.4,12.4 7.4,7.2 12.9,0.7 12.4,0.2 6.2,5.8 0.5,10.6" fill="#cc1414" stroke="#7a0808" stroke-width="0.35"/><circle cx="1.3" cy="1.3" r="0.6" fill="#ff9080"/><circle cx="1.2" cy="11.7" r="0.6" fill="#ff9080"/></svg>
<div class="t ced" style="left:48px;top:400px;">0920541166</div>
<div class="t nm" style="left:164px;top:400px;letter-spacing:-0.183px;">PINCAY MICHELLY</div>
<div class="t em" style="left:258.8px;top:400px;">( Empleado )</div>
<div class="a" style="left:451px;top:392px;width:269px;height:26px;overflow:hidden"><div class="t bk" style="left:2px;top:8px;">BANCO DEL PACIFICO [ Cuenta de Ahorros 1062270184 ]</div></div>
<div class="t vl" style="left:721px;top:400px;">600.66</div>
<div class="t dt" style="left:814px;top:401px;">REMUNERACION Y FONDO DE RESERVA DEL MES DE MAYO</div>
<div class="t cd" style="left:1095px;top:401px;">40101 - GASTO CORRIENTE – SUELDOS</div>
<div class="eb" style="left:16px;top:420px;width:28px"></div>
<svg class="a" style="left:21px;top:423px" width="18" height="17" viewBox="0 0 18 17" shape-rendering="crispEdges"><rect x="1" y="5" width="12" height="11" fill="#f2f2fc"/><rect x="2" y="7" width="9" height="4" fill="#eeeed0"/><rect x="1" y="5" width="1" height="10" fill="#747474"/><rect x="1" y="5" width="5" height="1" fill="#808080"/><rect x="12" y="8" width="1" height="8" fill="#000"/><rect x="1" y="15" width="12" height="1" fill="#000"/><rect x="3" y="11" width="2" height="1" fill="#5a64b0"/><rect x="6" y="11" width="5" height="1" fill="#4a6c90"/><rect x="3" y="13" width="2" height="1" fill="#101088"/><rect x="6" y="13" width="5" height="1" fill="#101880"/><rect x="8" y="2" width="6" height="1" fill="#a8a080"/><rect x="9" y="3" width="6" height="4" fill="#d8d0a0"/><rect x="13" y="4" width="2" height="3" fill="#b8c090"/><rect x="15" y="2" width="2" height="1" fill="#2060a0"/><rect x="15" y="3" width="2" height="4" fill="#4aa8ee"/><rect x="11" y="7" width="6" height="1" fill="#000"/><g fill="#000"><rect x="3" y="8" width="2" height="1"/><rect x="5" y="7" width="1" height="1"/><rect x="6" y="6" width="1" height="1"/><rect x="7" y="5" width="1" height="1"/><rect x="8" y="4" width="1" height="1"/><rect x="7" y="7" width="1" height="1"/><rect x="8" y="6" width="1" height="1"/><rect x="9" y="5" width="1" height="1"/><rect x="8" y="8" width="1" height="1"/><rect x="9" y="9" width="1" height="1"/><rect x="10" y="8" width="1" height="1"/><rect x="9" y="7" width="1" height="1"/><rect x="10" y="6" width="1" height="1"/></g><g fill="#f4f4c8"><rect x="4" y="7" width="1" height="1"/><rect x="5" y="6" width="1" height="1"/><rect x="6" y="5" width="1" height="1"/><rect x="7" y="4" width="1" height="1"/><rect x="6" y="7" width="1" height="1"/><rect x="7" y="6" width="1" height="1"/><rect x="8" y="5" width="1" height="1"/><rect x="8" y="7" width="1" height="1"/><rect x="9" y="8" width="1" height="1"/><rect x="9" y="6" width="1" height="1"/></g><rect x="7" y="3" width="1" height="1" fill="#c8c8b0"/></svg>
<div class="eb" style="left:132px;top:420px;width:28px"></div>
<svg class="a" style="left:139px;top:426px" width="14" height="14" viewBox="0 0 14 14"><polygon points="0,1.3 1.3,0 2.6,0.6 7,5.6 12.9,12.3 12.3,12.9 5.8,7 0.6,2.6" fill="#cc1414" stroke="#7a0808" stroke-width="0.35"/><polygon points="0,11.5 1.4,12.9 2.4,12.4 7.4,7.2 12.9,0.7 12.4,0.2 6.2,5.8 0.5,10.6" fill="#cc1414" stroke="#7a0808" stroke-width="0.35"/><circle cx="1.3" cy="1.3" r="0.6" fill="#ff9080"/><circle cx="1.2" cy="11.7" r="0.6" fill="#ff9080"/></svg>
<div class="t ced" style="left:48px;top:427px;">1207708478</div>
<div class="t nm" style="left:164px;top:427px;letter-spacing:-0.233px;">SANTILLAN JOHANNA</div>
<div class="t em" style="left:274.3px;top:427px;">( Empleado )</div>
<div class="a" style="left:451px;top:419px;width:269px;height:26px;overflow:hidden"><div class="t bk" style="left:2px;top:8px;">BANCO DEL PICHINCHA [ Cuenta de Ahorros 2202180772 ]</div></div>
<div class="t vl" style="left:721px;top:427px;">653.94</div>
<div class="t dt" style="left:814px;top:428px;">REMUNERACION Y FONDO DE RESERVA DEL MES DE MAYO</div>
<div class="t cd" style="left:1095px;top:428px;">40101 - GASTO CORRIENTE – SUELDOS</div>
<div class="a" style="left:15px;top:121px;width:1253px;height:1px;background:#000"></div>
<div class="a" style="left:15px;top:121px;width:1px;height:28px;background:#3a78b0"></div>
<div class="a" style="left:15px;top:148px;width:1253px;height:1px;background:#3a78b0"></div>
<div class="a" style="left:1267px;top:121px;width:1px;height:28px;background:#1e7a50"></div>
<div class="a" style="left:14px;top:646px;width:456px;height:57px;border:1px solid #a0a0a0;background:#f9f9fd"></div>
<div class="a" style="left:452px;top:648px;width:16px;height:53px;background:#efefef"></div>
<div class="t" style="left:19px;top:653px;font-size:10px;letter-spacing:0.08px;color:#202020">REMUNERACION Y FONDO DE RESERVA DEL MES DE MAYO</div>
<svg class="a" style="left:483px;top:648px" width="16" height="16" viewBox="0 0 16 16"><circle cx="8" cy="8" r="8" fill="#f4c20d"/><path d="M5.4,8 L5.4,6.6 A2.6,2.3 0 0 1 10.6,6.6 L10.6,8" fill="none" stroke="#1a1a1a" stroke-width="1.5"/><rect x="4.4" y="7.6" width="7.2" height="4.4" fill="#1a1a1a"/><rect x="7.4" y="8.6" width="1.2" height="2" fill="#c8a010"/></svg>
<div class="a" style="left:481px;top:676px;width:22px;height:23px;border-radius:4px;background:#fff;border:1px solid #ececec"></div>
<div class="a" style="left:484px;top:679px;width:16px;height:16px;background:#a0a0a0"></div>
<div class="t lbl" style="left:519px;letter-spacing:0.18px">Total Beneficiarios</div>
<div class="t lbl" style="left:708px">Total del SPi</div>
<div class="t lbl" style="left:827px;letter-spacing:-0.4px">No. Referencia</div>
<div class="t lbl" style="left:1040.5px;letter-spacing:-1px">Fecha</div>
<div class="fld" style="left:555px;background:#ffffdc"></div>
<div class="t fv" style="left:555px;width:125px;text-align:right;color:#d00000">12</div>
<div class="fld" style="left:690px;background:#ffffdc"></div>
<div class="t fv" style="left:690px;width:125px;text-align:right;color:#d00000">6,661.80</div>
<div class="fld" style="left:828px;border-color:#a8b8cc;background:#eef0f3"></div>
<div class="t fv" style="left:835px;letter-spacing:-0.3px;color:#707070">0000000037</div>
<div class="fld" style="left:964px;background:#fff"></div>
<div class="t fv" style="left:977px;letter-spacing:0.35px;color:#000">29/05/2025</div>
<div class="a" style="left:1101px;top:662px;width:158px;height:38px;border:1px solid #d2d2d2;border-radius:3px;background:#fafafa"></div>
<svg class="a" style="left:1107px;top:664px" width="34" height="34" viewBox="0 0 34 34"><defs><pattern id="chk2" width="2" height="2" patternUnits="userSpaceOnUse"><rect width="2" height="2" fill="#eeee9a"/><rect width="1" height="1" fill="#c8c870"/><rect x="1" y="1" width="1" height="1" fill="#c8c870"/></pattern></defs><rect x="21" y="5" width="12.5" height="10.5" fill="#000"/><path d="M19.5,8.5 L19.5,2.5 L20.5,1.5 L24.5,1.5 L25.5,2.5 L31.5,2.5 L31.5,13.5 L19.5,13.5 Z" fill="url(#chk2)" stroke="#808070" stroke-width="1"/><path d="M18.5,8.5 L29.5,8.5 L32,13.5 L19.5,13.5 Z" fill="url(#chk2)" stroke="#707060" stroke-width="1"/><path d="M29.5,8.5 L32,13.5" stroke="#000" stroke-width="1"/><rect x="3" y="25" width="14.5" height="9" fill="#000"/><path d="M1.5,26.5 L1.5,21.5 L2.5,20.5 L6.5,20.5 L7.5,21.5 L15.5,21.5 L15.5,32.5 L1.5,32.5 Z" fill="url(#chk2)" stroke="#808070" stroke-width="1"/><path d="M0.5,26.5 L12.5,26.5 L15.5,32.5 L2.5,32.5 Z" fill="url(#chk2)" stroke="#707060" stroke-width="1"/><path d="M4.5,16.5 C5,12.5 7.5,8.8 10.5,8.5 C13,8.3 15,9.5 17,10.8 L11.5,19.5 Z" fill="#fff" stroke="#6a6a6a" stroke-width="1"/><path d="M17,10.8 L11.5,19.5 L4.5,16.5" fill="none" stroke="#000" stroke-width="1.1"/><path d="M6,21.5 L8.5,19 L11.5,19.5 L17.5,15.5 L19,17 L12.5,24.5 Z" fill="#fff" stroke="#000" stroke-width="1"/><path d="M8,25.5 L12.5,24.5 L19,19.5 L20.5,21 L14,29 Z" fill="#fff" stroke="#000" stroke-width="1"/><path d="M19.5,25.6 C22.5,25.6 25,24 25.6,19.5" fill="none" stroke="#e01818" stroke-width="1.2"/><path d="M23.2,20.2 L25.7,16.8 L28.2,20.2 Z" fill="#e01818"/></svg>
<div class="t" style="left:1151px;top:670.5px;font-size:9px;font-weight:bold;letter-spacing:0.75px;color:#d81818;-webkit-text-stroke:0.2px #d81818;line-height:11px"><u>C</u>arga Masiva desde</div>
<div class="t" style="left:1171.5px;top:681.5px;font-size:9px;font-weight:bold;letter-spacing:0.75px;color:#d81818;-webkit-text-stroke:0.2px #d81818;line-height:11px">archivo TXT</div>
</body></html>
